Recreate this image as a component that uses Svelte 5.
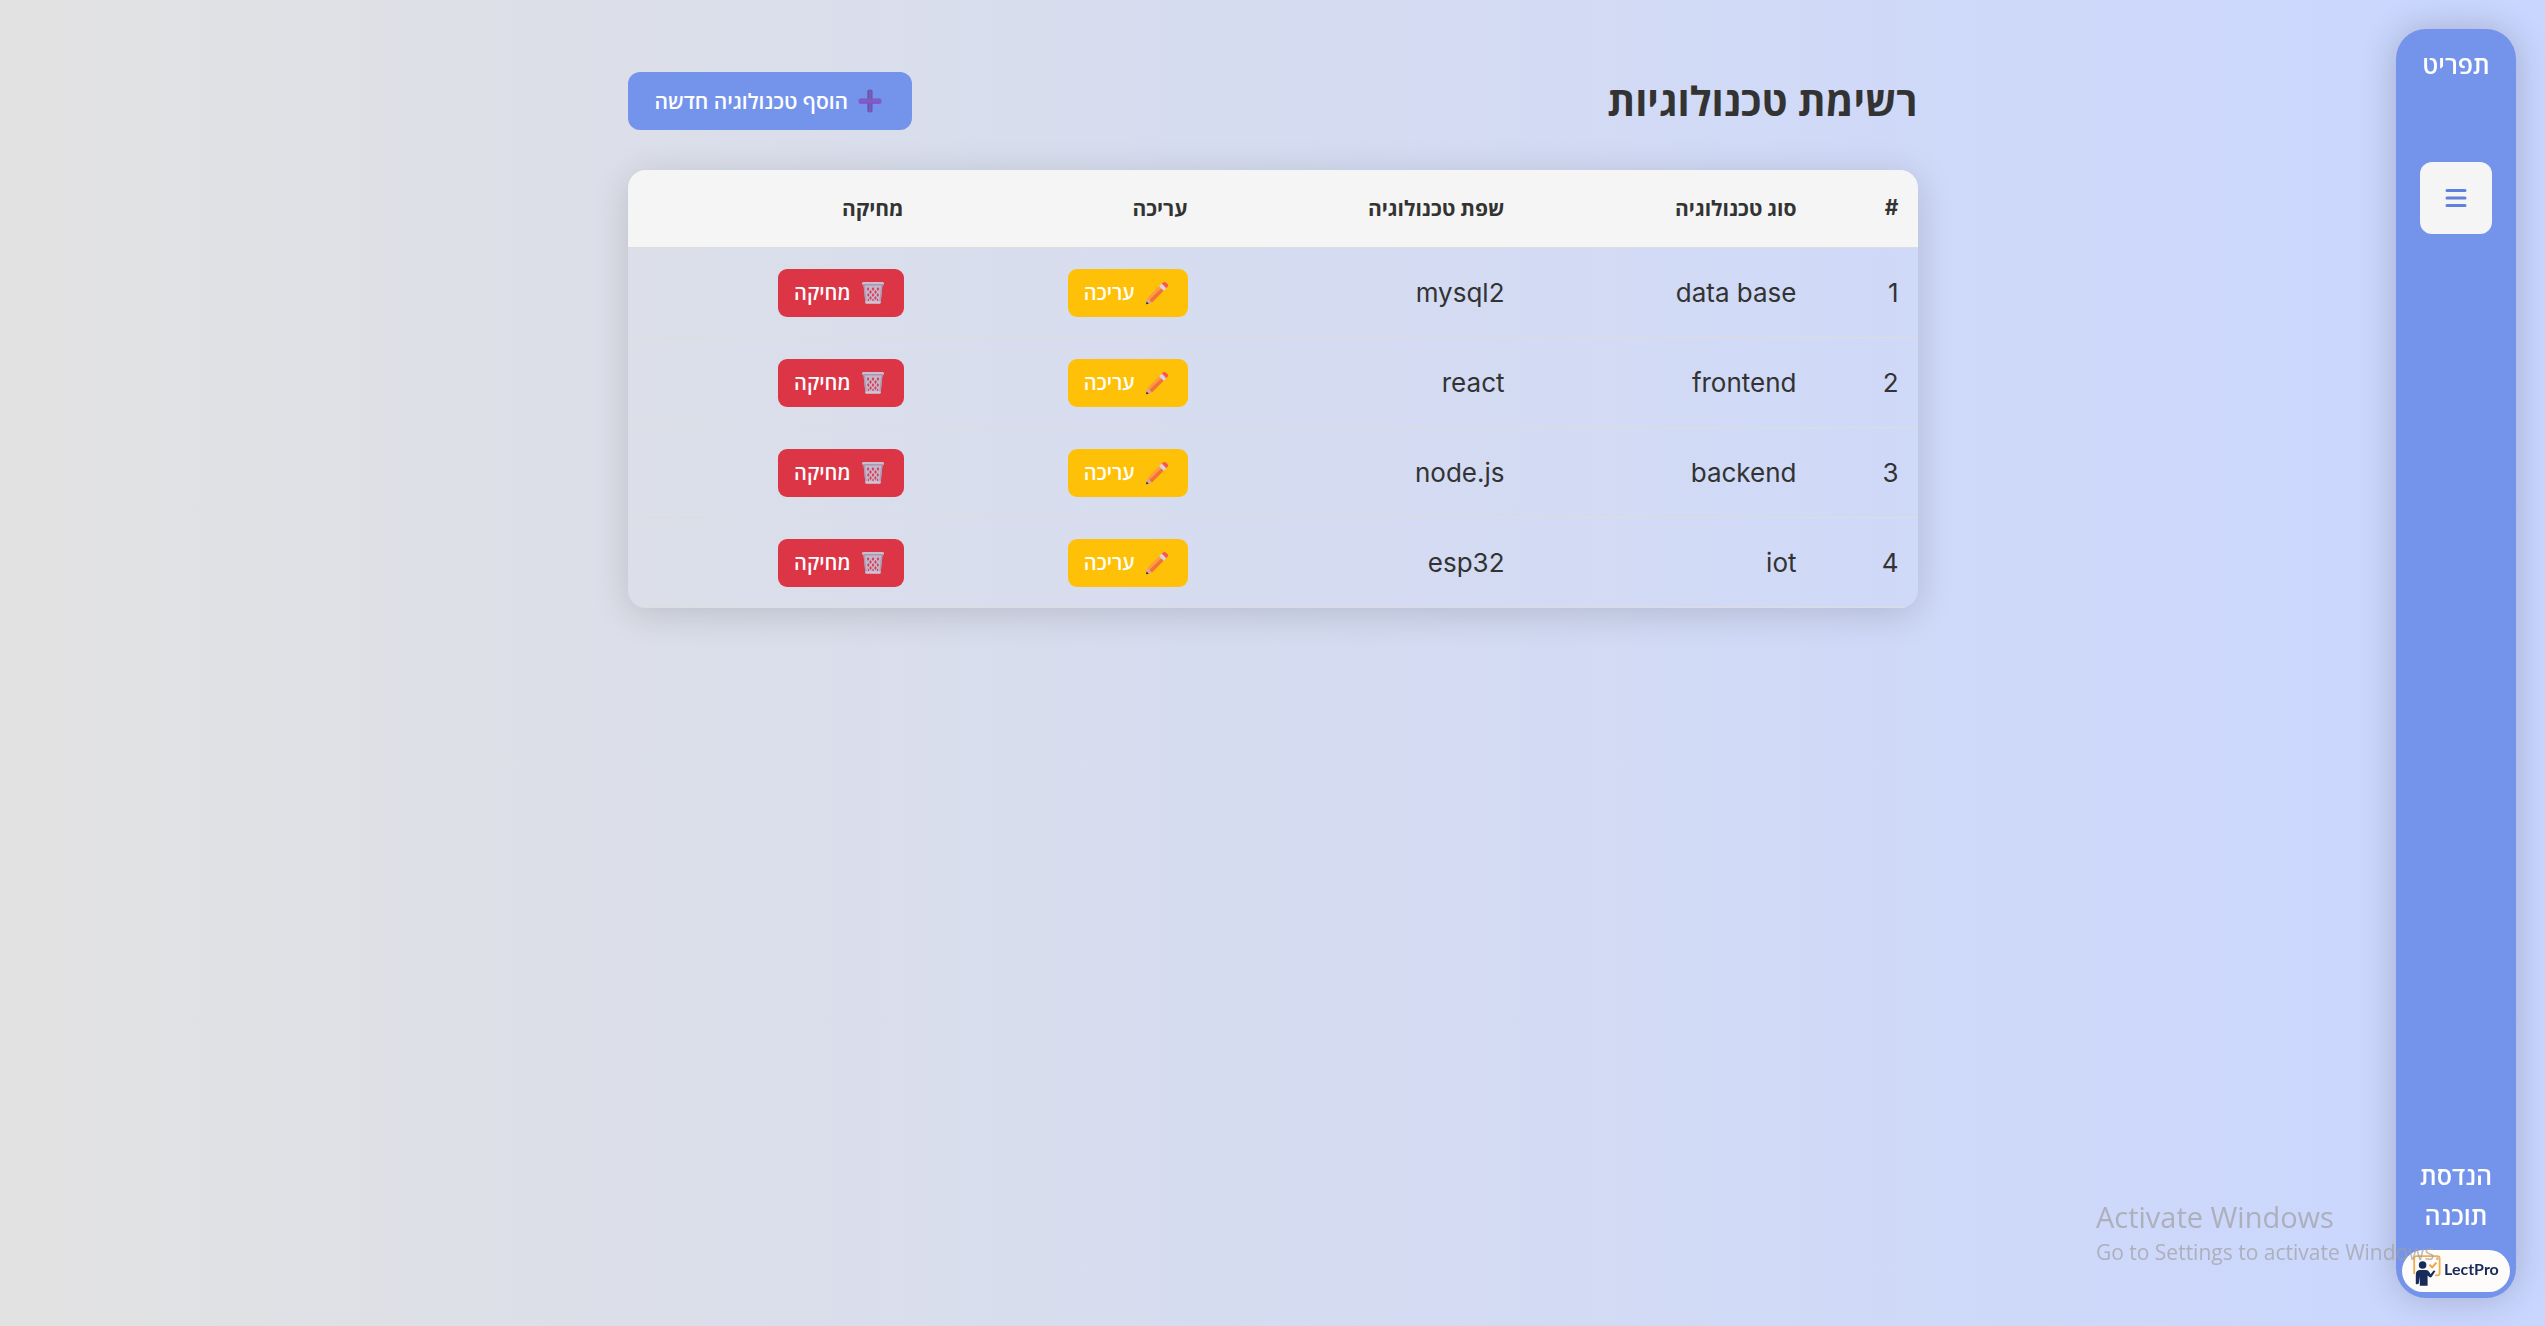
<script>
  const technologies = [
    { id: 1, type: 'data base', language: 'mysql2' },
    { id: 2, type: 'frontend', language: 'react' },
    { id: 3, type: 'backend', language: 'node.js' },
    { id: 4, type: 'iot', language: 'esp32' }
  ];
</script>

{#snippet plusIcon()}
  <svg class="icon" viewBox="0 0 24 24" aria-hidden="true">
    <defs>
      <linearGradient id="plus-v" x1="0" x2="1" y1="0" y2="0">
        <stop offset="0" stop-color="#5b4a9c" /><stop offset=".5" stop-color="#7e62bb" /><stop offset="1" stop-color="#6c48b4" />
      </linearGradient>
      <linearGradient id="plus-h" x1="0" x2="0" y1="0" y2="1">
        <stop offset="0" stop-color="#6f61ac" /><stop offset=".45" stop-color="#8061c4" /><stop offset="1" stop-color="#8a44dc" />
      </linearGradient>
    </defs>
    <rect x="9.5" y=".5" width="5" height="23" rx="1.8" fill="url(#plus-v)" />
    <rect x=".5" y="9.5" width="23" height="5.2" rx="1.8" fill="url(#plus-h)" />
    <rect x="9.8" y="9.8" width="4.4" height="4.4" fill="#7c5cc0" />
  </svg>
{/snippet}

{#snippet pencilIcon()}
  <svg class="icon" viewBox="0 0 24 24" aria-hidden="true">
    <path d="M16.4 2.8 18.5 1.2Q19.7.5 20.8 1.5L22.6 3.2Q23.5 4.4 22.7 5.4L20.9 7.4Z" fill="#f8564f" />
    <path d="M14 5.4 16.7 2.6 21.2 7.2 18.5 9.9Z" fill="#d9d3e6" />
    <path d="M2.5 17 14 5.3 16.2 7.5 4 19.3Z" fill="#ff9a45" />
    <path d="M4 19.3 16.2 7.5 18.6 9.8 7 21.6Z" fill="#f36f3c" />
    <path d="M2.5 17 7 21.6 1.3 23 1 22.4Z" fill="#d9a79f" />
    <path d="M1.5 20.4 3.9 22.7 1 23.2Z" fill="#3b2b4c" />
  </svg>
{/snippet}

{#snippet trashIcon()}
  <svg class="icon" viewBox="0 0 24 24" aria-hidden="true">
    <path d="M2.5 3.5 4.4 22H19.6L21.5 3.5Z" fill="#c6b6cb" />
    <g fill="#d93b50">
      <path d="M7 6l1.3 2L7 10 5.8 8zM12 6l1.3 2-1.3 2-1.3-2zM17 6l1.3 2-1.3 2-1.3-2z" />
      <path d="M9.5 9l1.3 2-1.3 2-1.3-2zM14.5 9l1.3 2-1.3 2-1.3-2z" />
      <path d="M7.3 12l1.2 2-1.2 2-1.2-2zM12 12l1.3 2-1.3 2-1.3-2zM16.8 12l1.2 2-1.2 2-1.2-2z" />
      <path d="M9.6 15l1.2 2-1.2 2-1.3-2zM14.4 15l1.3 2-1.3 2-1.2-2z" />
      <path d="M7.4 17.6l1 1.4-1 1.2-.8-1.2zM12 17.8l1 1.3-1 1.1-1-1.1zM16.6 17.6l.8 1.4-.8 1.2-1-1.2z" />
    </g>
    <path d="M3.2 4 5 21M20.8 4 19 21" stroke="#a99bb5" stroke-width="1.4" fill="none" />
    <rect x="1" y="1" width="22" height="3.2" rx="1.4" fill="#c9bdd0" />
    <rect x="2" y="3.2" width="20" height="1.2" fill="#9e8fa9" />
    <rect x="4.4" y="20.6" width="15.2" height="2.2" rx=".8" fill="#d0c5d6" />
  </svg>
{/snippet}

<div class="page" dir="rtl">
  <aside class="sidebar">
    <span class="label">תפריט</span>
    <button class="toggle" type="button" aria-label="תפריט">
      <svg viewBox="0 0 24 24" aria-hidden="true">
        <path d="M3 4.5H21M3 12H21M3 19.5H21" />
      </svg>
    </button>
    <span class="label department">הנדסת תוכנה</span>
    <a class="logo" href="#home" dir="ltr">
      <svg viewBox="0 0 28 32" aria-hidden="true">
        <path d="M1.2 19V3.4Q1.2 1.2 3.4 1.2H24.4Q26.6 1.2 26.6 3.4V18Q26.6 20.4 24.4 20.4H22" fill="none" stroke="#f3ac4c" stroke-width="1.8" />
        <path d="M16.5 9.8 19.2 12.4 23.4 7.6" fill="none" stroke="#f3a33a" stroke-width="2" />
        <circle cx="9.6" cy="10" r="3.8" fill="#182b5a" />
        <path d="M2.8 29V19.5Q2.8 15 7.3 15H13Q15.2 15 16.3 17L17.6 19.2 20.4 15.8Q21.6 14.8 22.3 16.2L18.8 21.8Q17.4 23 16 21.8L14.6 20.6V30.8H6.8V21.6L5.8 28.6Q4.4 29.8 2.8 29Z" fill="#182b5a" />
      </svg>
      <span>LectPro</span>
    </a>
  </aside>

  <main>
    <header>
      <h1>רשימת טכנולוגיות</h1>
      <button class="btn add" type="button">{@render plusIcon()}<span>הוסף טכנולוגיה חדשה</span></button>
    </header>
    <div class="card">
      <table>
        <thead>
          <tr>
            <th class="c-id">#</th>
            <th class="c-type">סוג טכנולוגיה</th>
            <th class="c-lang">שפת טכנולוגיה</th>
            <th class="c-edit">עריכה</th>
            <th class="c-delete">מחיקה</th>
          </tr>
        </thead>
        <tbody>
          {#each technologies as tech (tech.id)}
            <tr>
              <td>{tech.id}</td>
              <td>{tech.type}</td>
              <td>{tech.language}</td>
              <td><button class="btn small edit" type="button">{@render pencilIcon()}<span>עריכה</span></button></td>
              <td><button class="btn small delete" type="button">{@render trashIcon()}<span>מחיקה</span></button></td>
            </tr>
          {/each}
        </tbody>
      </table>
    </div>
  </main>

  <div class="watermark" dir="ltr">
    <p class="watermark-title">Activate Windows</p>
    <p class="watermark-text">Go to Settings to activate Windows.</p>
  </div>
</div>

<style>
  :global(body) { margin: 0; }

  .page {
    position: relative;
    box-sizing: border-box;
    min-height: 100vh;
    padding: 72px 30px;
    background: linear-gradient(to right, #e2e2e2, #c9d6ff);
    color: #333;
    font-family: "Open Sans", "Noto Sans", sans-serif;
  }

  h1, p { margin: 0; }

  button { font-family: inherit; cursor: pointer; }

  .sidebar {
    position: fixed;
    inset: 29px 29px 28px auto;
    box-sizing: border-box;
    width: 120px;
    padding: 15px 6px 6px;
    display: flex;
    flex-direction: column;
    align-items: center;
    border-radius: 30px;
    background: #7494ec;
    box-shadow: 0 0 36px rgba(0, 0, 0, 0.2);
  }

  .label {
    color: #fff;
    font-size: 25px;
    font-weight: 600;
    line-height: 40px;
    text-align: center;
  }

  .department { width: 84px; margin-top: auto; }

  .toggle {
    width: 72px;
    height: 72px;
    margin-top: 78px;
    padding: 0;
    display: grid;
    place-items: center;
    border: 0;
    border-radius: 12px;
    background: #f5f5f5;
  }

  .toggle svg {
    width: 24px;
    height: 24px;
    fill: none;
    stroke: #5f80dd;
    stroke-width: 3;
    stroke-linecap: round;
  }

  .logo {
    box-sizing: border-box;
    width: 108px;
    height: 42px;
    margin-top: 15px;
    padding-left: 11px;
    display: flex;
    align-items: center;
    gap: 3px;
    border-radius: 24px;
    background: #fdfcfb;
    color: #182b5a;
    font-family: Lato, sans-serif;
    font-size: 16px;
    font-weight: 700;
    line-height: 20px;
    text-decoration: none;
  }

  .logo svg { width: 28px; height: 32px; flex: none; }
  .logo span { margin-bottom: 4px; }

  main { max-width: 1290px; margin: 0 auto; }

  header {
    display: flex;
    align-items: center;
    justify-content: space-between;
    margin-bottom: 40px;
  }

  h1 { font-size: 40px; font-weight: 700; line-height: 58px; }

  .btn {
    display: inline-flex;
    align-items: center;
    gap: 10px;
    border: 0;
    color: #fff;
    white-space: nowrap;
  }

  .add {
    height: 58px;
    padding: 0 30px 0 27px;
    border-radius: 12px;
    background: #7494ec;
    font-size: 21px;
    font-weight: 600;
  }

  .small {
    height: 48px;
    padding: 0 19px 0 16px;
    border-radius: 9px;
    font-size: 20px;
    font-weight: 600;
  }

  .edit { background: #ffc107; }
  .delete { background: #dc3545; }

  .icon { width: 24px; height: 24px; flex: none; }

  .card {
    overflow: hidden;
    border-radius: 18px;
    box-shadow: 0 6px 36px rgba(0, 0, 0, 0.15);
  }

  table {
    width: 100%;
    border-collapse: separate;
    border-spacing: 0;
    table-layout: fixed;
  }

  th, td {
    box-sizing: border-box;
    padding: 0 19px;
    border-bottom: 1px solid #ddd;
    text-align: right;
  }

  th {
    height: 78px;
    padding-bottom: 2px;
    background: #f5f5f5;
    font-family: Inter, "Open Sans", sans-serif;
    font-size: 21px;
    font-weight: 700;
  }

  td {
    height: 90px;
    font-family: Inter, "Open Sans", sans-serif;
    font-size: 26px;
    vertical-align: middle;
  }

  td .btn { font-family: "Open Sans", sans-serif; vertical-align: middle; }

  /* Column proportions; the fixed table layout shares out the card's width. */
  .c-id { width: 102px; }
  .c-type { width: 292px; }
  .c-lang { width: 317px; }
  .c-edit { width: 284px; }
  .c-delete { width: 295px; }

  .watermark {
    position: fixed;
    right: 105px;
    bottom: 59px;
    color: rgba(160, 160, 160, 0.7);
    white-space: nowrap;
    pointer-events: none;
  }

  .watermark-title { font-size: 29px; line-height: 40px; }
  .watermark-text { font-size: 21px; line-height: 30px; }
</style>
